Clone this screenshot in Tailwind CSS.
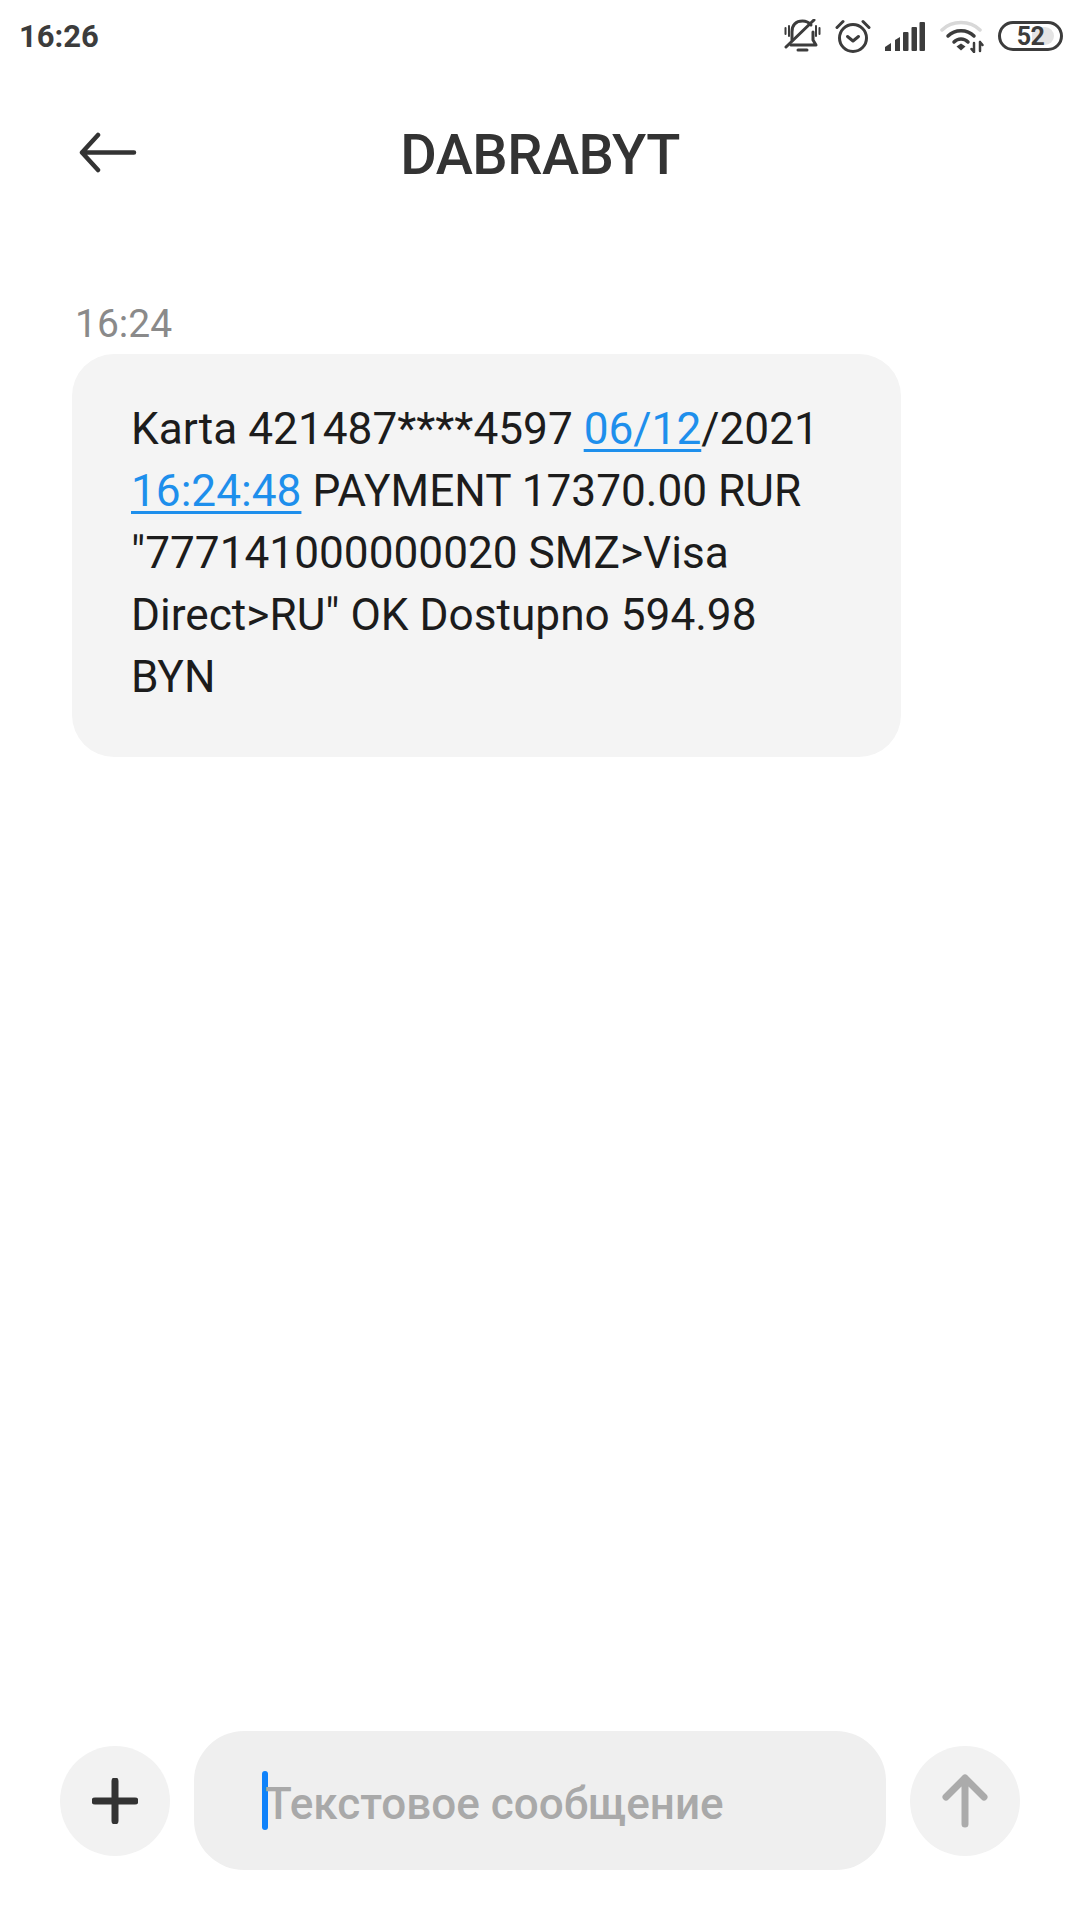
<!DOCTYPE html>
<html lang="ru">

<head>
    <meta charset="UTF-8">
    <meta name="viewport" content="width=device-width, initial-scale=1.0">
    <script src="https://cdn.jsdelivr.net/npm/@tailwindcss/browser@4"></script>
    <title>DABRABYT</title>
</head>

<body class="bg-white font-['Roboto',sans-serif]">
    <div class="w-[1080px] h-[1920px] flex flex-col overflow-hidden">
        <!-- status bar -->
        <div class="h-[72px] flex items-center justify-between pl-[19px] pr-[17px] text-[#3c3c3c]">
            <span class="text-[31px] font-bold leading-none">16:26</span>
            <div class="flex items-center">
                <!-- muted bell -->
                <svg class="w-[37px] h-[34px] ml-[1px]" viewBox="0 0 37 34" fill="none" stroke="#3c3c3c" stroke-width="3" stroke-linecap="round" stroke-linejoin="round">
                    <path d="M8 21V13C8 6 12 2 18.500 2C22 2 25 3.500 27 6M29 13V21L32 26H7" />
                    <path d="M2 28L30 1" />
                    <path d="M1.500 9V15M5 7V17M32 7V17M35.500 9V15" stroke-width="2" />
                    <path d="M14 31H23" />
                </svg>
                <!-- alarm -->
                <svg class="w-[36px] h-[34px] ml-[14px]" viewBox="0 0 36 34" fill="none" stroke="#3c3c3c" stroke-width="3" stroke-linecap="round" stroke-linejoin="round">
                    <circle cx="18" cy="19" r="13.500" />
                    <path d="M2 8.500L8 2.500M34 8.500L28 2.500" />
                    <path d="M12.500 17.500L18 22L23.500 17.500" />
                </svg>
                <!-- signal -->
                <svg class="w-[40px] h-[30px] ml-[14px]" viewBox="0 0 40 30" fill="#3c3c3c">
                    <path d="M0 30V26L6 22V30Z" />
                    <path d="M10 30V19L15 16V30Z" />
                    <rect x="18" y="11" width="5.500" height="19" rx="1" />
                    <rect x="26.500" y="6" width="5.500" height="24" rx="1" />
                    <rect x="34.500" y="1" width="5.500" height="29" rx="1" />
                </svg>
                <!-- wifi -->
                <svg class="w-[44px] h-[34px] ml-[15px]" viewBox="0 0 44 34" fill="none" stroke-linecap="round">
                    <path d="M2 11C12 1 30 1 40 11" stroke="#d8d8d8" stroke-width="3.500" />
                    <path d="M8 17C15 10 27 10 34 17" stroke="#3c3c3c" stroke-width="3.500" />
                    <path d="M14 23C18 19 24 19 28 23" stroke="#3c3c3c" stroke-width="3.500" />
                    <path d="M16.500 27.500L21 24.500L25.500 27.500L21 31.500Z" fill="#3c3c3c" />
                    <path d="M34 24V33M31.500 30L34 33M40 23V32M40 23L42.500 26" stroke="#3c3c3c" stroke-width="2.500" />
                </svg>
                <!-- battery -->
                <div class="relative w-[65px] h-[30px] ml-[14px] rounded-full border-[3px] border-[#3c3c3c] flex items-center justify-center overflow-hidden">
                    <div class="absolute right-[6px] top-[3px] bottom-[3px] w-[22px] rounded-r-full bg-[#e4e4e4]"></div>
                    <span class="relative text-[25px] font-bold leading-none tracking-[-0.5px]">52</span>
                </div>
            </div>
        </div>

        <!-- header -->
        <div class="relative h-[162px] flex items-center justify-center text-[#333333]">
            <svg class="absolute left-[79px] top-[60px] w-[58px] h-[41px]" viewBox="0 0 58 41" fill="none" stroke="#333333" stroke-width="4.500" stroke-linecap="round" stroke-linejoin="round">
                <path d="M55 20.500H3M19 3L3 20.500L19 38" />
            </svg>
            <h1 class="text-[56px] font-medium leading-none tracking-[-0.5px] pt-[3px]">DABRABYT</h1>
        </div>

        <!-- message -->
        <div class="pl-[75px] pt-[63px] text-[39px] leading-[55px] mb-[2px] text-[#8a8a8a]">16:24</div>
        <div class="ml-[72px] w-[829px] pl-[59px] pr-[60px] pt-[44px] pb-[49px] rounded-[42px] bg-[#f4f4f4] text-[44.200px] leading-[62px] text-[#1c1c1c]">
            Karta 421487****4597 <a class="text-[#1e8fec] underline underline-offset-[5px] decoration-[3px]" href="#">06/12</a>/2021
            <a class="text-[#1e8fec] underline underline-offset-[5px] decoration-[3px]" href="#">16:24:48</a> PAYMENT 17370.00 RUR
            "777141000000020 SMZ&gt;Visa Direct&gt;RU" OK Dostupno 594.98 BYN
        </div>

        <!-- composer -->
        <div class="mt-auto mb-[50px] pl-[60px] flex items-center gap-[24px]">
            <div class="w-[110px] h-[110px] rounded-full bg-[#f2f2f2] flex items-center justify-center">
                <svg class="w-[46px] h-[46px]" viewBox="0 0 46 46" fill="none" stroke="#333333" stroke-width="7" stroke-linecap="round">
                    <path d="M23 3V43M3 23H43" />
                </svg>
            </div>
            <div class="w-[692px] h-[139px] rounded-[50px] bg-[#efefef] flex items-center pl-[68px] text-[44px] font-medium text-[#a9a9a9]">
                <span class="w-[6px] h-[59px] rounded-full bg-[#0f82fa] -mr-[3px] shrink-0"></span>
                <span class="pt-[6px]">Текстовое сообщение</span>
            </div>
            <div class="w-[110px] h-[110px] rounded-full bg-[#f2f2f2] flex items-center justify-center">
                <svg class="w-[46px] h-[54px]" viewBox="0 0 46 54" fill="none" stroke="#ababab" stroke-width="7" stroke-linecap="round" stroke-linejoin="round">
                    <path d="M23 50V4M4 23L23 4L42 23" />
                </svg>
            </div>
        </div>
    </div>
</body>

</html>
